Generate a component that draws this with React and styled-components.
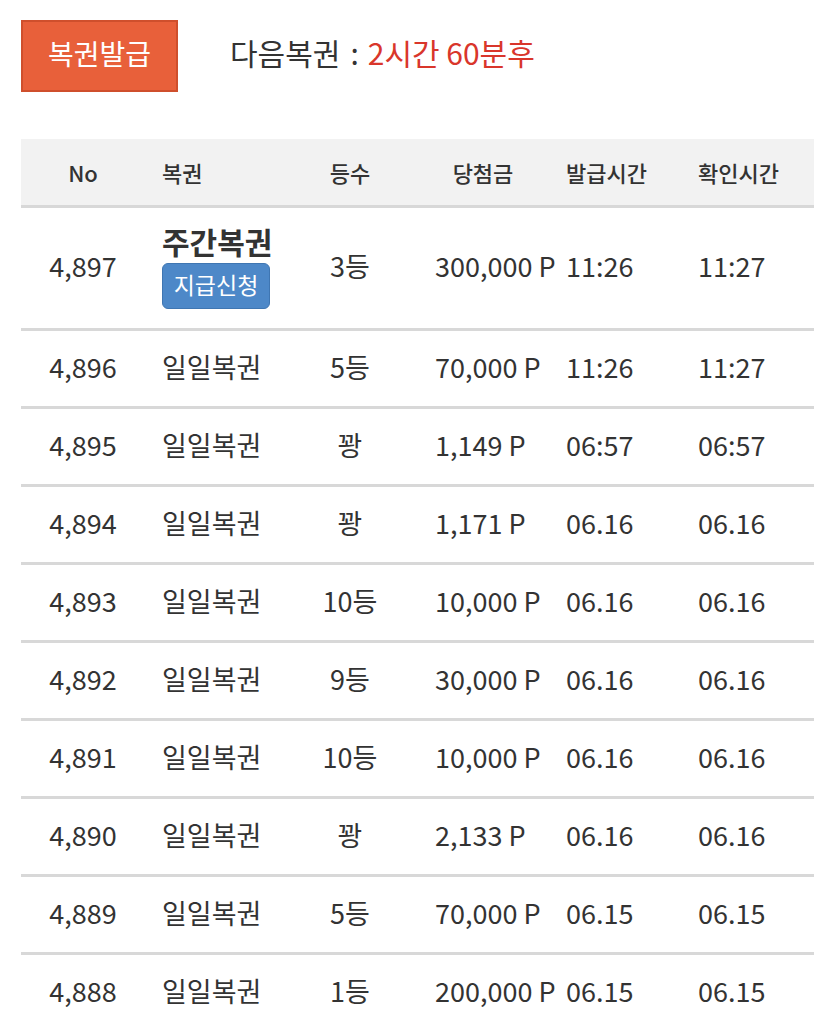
import styled, { createGlobalStyle } from "styled-components";

const rows = [
  { no: "4,896", name: "일일복권", rank: "5등", prize: "70,000 P", issued: "11:26", checked: "11:27" },
  { no: "4,895", name: "일일복권", rank: "꽝", prize: "1,149 P", issued: "06:57", checked: "06:57" },
  { no: "4,894", name: "일일복권", rank: "꽝", prize: "1,171 P", issued: "06.16", checked: "06.16" },
  { no: "4,893", name: "일일복권", rank: "10등", prize: "10,000 P", issued: "06.16", checked: "06.16" },
  { no: "4,892", name: "일일복권", rank: "9등", prize: "30,000 P", issued: "06.16", checked: "06.16" },
  { no: "4,891", name: "일일복권", rank: "10등", prize: "10,000 P", issued: "06.16", checked: "06.16" },
  { no: "4,890", name: "일일복권", rank: "꽝", prize: "2,133 P", issued: "06.16", checked: "06.16" },
  { no: "4,889", name: "일일복권", rank: "5등", prize: "70,000 P", issued: "06.15", checked: "06.15" },
  { no: "4,888", name: "일일복권", rank: "1등", prize: "200,000 P", issued: "06.15", checked: "06.15" },
];

export default function App() {
  return (
    <>
      <GlobalStyle />
      <Page>
        <TopBar>
          <IssueButton>복권발급</IssueButton>
          <NextInfo>
            다음복권<Colon>:</Colon>
            <Remain>2시간 60분후</Remain>
          </NextInfo>
        </TopBar>
        <Table>
          <colgroup>
            <col style={{ width: 124 }} />
            <col style={{ width: 155 }} />
            <col style={{ width: 100 }} />
            <col style={{ width: 166 }} />
            <col style={{ width: 132 }} />
            <col />
          </colgroup>
          <thead>
            <tr>
              <Th $align="center">No</Th>
              <Th $pad="17px">복권</Th>
              <Th $align="center">등수</Th>
              <Th $align="center">당첨금</Th>
              <Th>발급시간</Th>
              <Th>확인시간</Th>
            </tr>
          </thead>
          <tbody>
            <Row $tall>
              <Td $align="center">4,897</Td>
              <Td $pad="17px">
                <Weekly>주간복권</Weekly>
                <ClaimButton>지급신청</ClaimButton>
              </Td>
              <Td $align="center">3등</Td>
              <Td $pad="35px">300,000 P</Td>
              <Td>11:26</Td>
              <Td>11:27</Td>
            </Row>
            {rows.map((r) => (
              <Row key={r.no}>
                <Td $align="center">{r.no}</Td>
                <Td $pad="17px">{r.name}</Td>
                <Td $align="center">{r.rank}</Td>
                <Td $pad="35px">{r.prize}</Td>
                <Td>{r.issued}</Td>
                <Td>{r.checked}</Td>
              </Row>
            ))}
          </tbody>
        </Table>
      </Page>
    </>
  );
}

const GlobalStyle = createGlobalStyle`
  body {
    margin: 0;
    background: #fff;
    font-family: "Noto Sans CJK KR", "Noto Sans", sans-serif;
    color: #333;
  }
`;

const Page = styled.div`
  padding: 20px 21px 0 21px;
`;

const TopBar = styled.div`
  display: flex;
  align-items: center;
  height: 72px;
  margin-bottom: 47px;
`;

const IssueButton = styled.button`
  width: 157px;
  height: 72px;
  background: #e8603a;
  border: 2px solid #cf4f2c;
  color: #fff;
  font-family: inherit;
  font-size: 28px;
  line-height: 1;
  padding: 0 0 6px 0;
`;

const NextInfo = styled.div`
  margin-left: 52px;
  margin-bottom: 8px;
  font-size: 30px;
  color: #333;
  white-space: nowrap;
`;

const Colon = styled.span`
  margin: 0 9px 0 10px;
`;

const Remain = styled.span`
  color: #d9362b;
`;

const Table = styled.table`
  width: 793px;
  border-collapse: collapse;
  table-layout: fixed;
`;

const Th = styled.th`
  height: 66px;
  background: #f2f2f2;
  border-bottom: 3px solid #d8d8d8;
  font-size: 22px;
  font-weight: 500;
  color: #333;
  text-align: ${(p) => p.$align || "left"};
  padding: 0 0 0 ${(p) => p.$pad || "0"};
  white-space: nowrap;
`;

const Row = styled.tr`
  height: ${(p) => (p.$tall ? "123px" : "78px")};
  border-bottom: 3px solid #d8d8d8;
`;

const Td = styled.td`
  font-size: 27px;
  color: #333;
  text-align: ${(p) => p.$align || "left"};
  padding: 0 0 5px ${(p) => p.$pad || "0"};
  white-space: nowrap;
  overflow: visible;
  vertical-align: middle;
`;

const Weekly = styled.div`
  font-size: 30px;
  font-weight: 700;
  line-height: 36px;
`;

const ClaimButton = styled.button`
  display: block;
  margin-top: 4px;
  width: 108px;
  height: 46px;
  background: #4d88c8;
  border: 1px solid #3f76b2;
  border-radius: 6px;
  color: #fff;
  font-family: inherit;
  font-size: 23px;
  line-height: 1;
  padding: 0 0 2px 0;
`;
